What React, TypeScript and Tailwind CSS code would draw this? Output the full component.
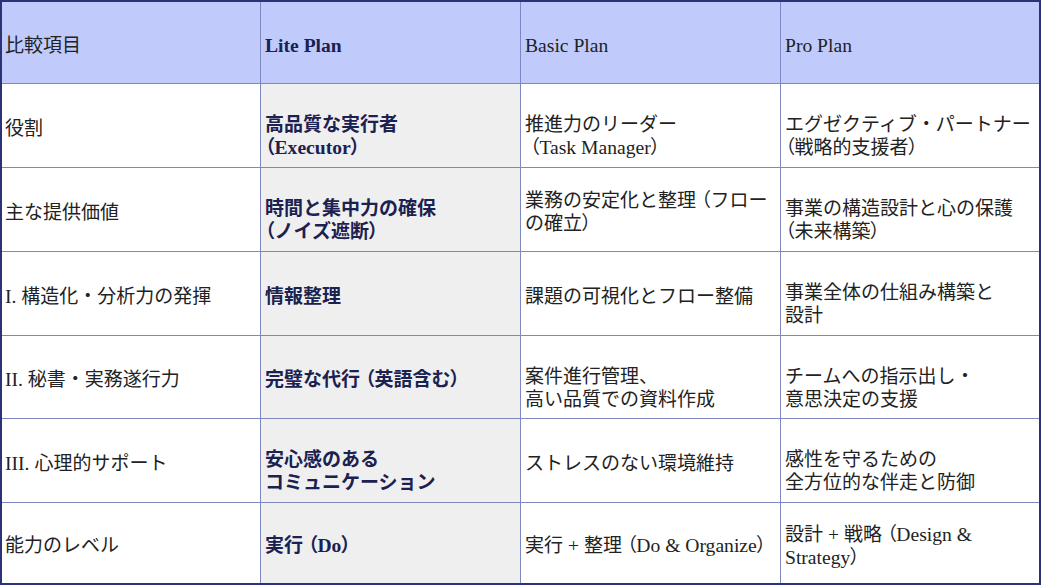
type Cell = { lines: string[]; wrap?: boolean };

const rows: { label: string; lite: Cell; basic: Cell; pro: Cell }[] = [
  {
    label: "役割",
    lite: { lines: ["高品質な実行者", "（Executor）"] },
    basic: { lines: ["推進力のリーダー", " （Task Manager）"] },
    pro: { lines: ["エグゼクティブ・パートナー", "（戦略的支援者）"] },
  },
  {
    label: "主な提供価値",
    lite: { lines: ["時間と集中力の確保", "（ノイズ遮断）"] },
    basic: { lines: ["業務の安定化と整理 （フロー", "の確立）"], wrap: true },
    pro: { lines: ["事業の構造設計と心の保護", "（未来構築）"] },
  },
  {
    label: "I. 構造化・分析力の発揮",
    lite: { lines: ["情報整理"] },
    basic: { lines: ["課題の可視化とフロー整備"] },
    pro: { lines: ["事業全体の仕組み構築と", "設計"] },
  },
  {
    label: "II. 秘書・実務遂行力",
    lite: { lines: ["完璧な代行 （英語含む）"] },
    basic: { lines: ["案件進行管理、", "高い品質での資料作成"] },
    pro: { lines: ["チームへの指示出し・", "意思決定の支援"] },
  },
  {
    label: "III. 心理的サポート",
    lite: { lines: ["安心感のある", "コミュニケーション"] },
    basic: { lines: ["ストレスのない環境維持"] },
    pro: { lines: ["感性を守るための", "全方位的な伴走と防御"] },
  },
  {
    label: "能力のレベル",
    lite: { lines: ["実行 （Do）"] },
    basic: { lines: ["実行 + 整理 （Do & Organize）"] },
    pro: { lines: ["設計 + 戦略 （Design &", "Strategy）"], wrap: true },
  },
];

// latin runs a touch larger than kana/kanji; fullwidth brackets set proportional
const Txt = ({ s }: { s: string }) => (
  <>
    {s.split(/([ -~]+|[（）])/).map((p, i) =>
      /^[ -~]+$/.test(p) ? (
        <span key={i} className="text-[19.6px]">{p}</span>
      ) : /^[（）]$/.test(p) ? (
        <span key={i} className="[font-feature-settings:'palt']">{p}</span>
      ) : (
        <span key={i}>{p}</span>
      )
    )}
  </>
);

const CellBox = ({ c, className }: { c: Cell; className: string }) => {
  const low = c.lines.length > 1 && !c.wrap;
  return (
    <div className={`flex items-center pl-1 ${low ? "pt-[21px]" : "pt-[5px]"} ${className}`}>
      <div>
        {c.lines.map((l, i) => (
          <div key={i} className="whitespace-pre">
            <Txt s={l} />
          </div>
        ))}
      </div>
    </div>
  );
};

export default function App() {
  return (
    <div
      className="w-[1041px] h-[585px] border-2 border-[#2b3376] bg-[#7d88c2] grid grid-cols-[258px_259px_259px_1fr] grid-rows-[81px_83px_83px_83px_82px_83px_1fr] gap-px text-[19px] leading-[23px] text-[#222222]"
      style={{ fontFamily: '"Liberation Serif", "Noto Sans CJK JP", serif' }}
    >
      <div className="bg-[#c0cbfc] flex items-center pl-[3px] pt-[6px]">比較項目</div>
      <div className="bg-[#c0cbfc] flex items-center pl-1 pt-[6px] font-bold text-[19.6px] text-[#1b2150]">Lite Plan</div>
      <div className="bg-[#c0cbfc] flex items-center pl-1 pt-[6px] text-[19.6px]">Basic Plan</div>
      <div className="bg-[#c0cbfc] flex items-center pl-1 pt-[6px] text-[19.6px]">Pro Plan</div>
      {rows.map((r) => (
        <>
          <div key={r.label + "a"} className="bg-white flex items-center pl-[3px] pt-[5px] whitespace-pre">
            <Txt s={r.label} />
          </div>
          <CellBox key={r.label + "b"} c={r.lite} className="bg-[#efefef] font-bold text-[#1b2150]" />
          <CellBox key={r.label + "c"} c={r.basic} className="bg-white" />
          <CellBox key={r.label + "d"} c={r.pro} className="bg-white" />
        </>
      ))}
    </div>
  );
}
